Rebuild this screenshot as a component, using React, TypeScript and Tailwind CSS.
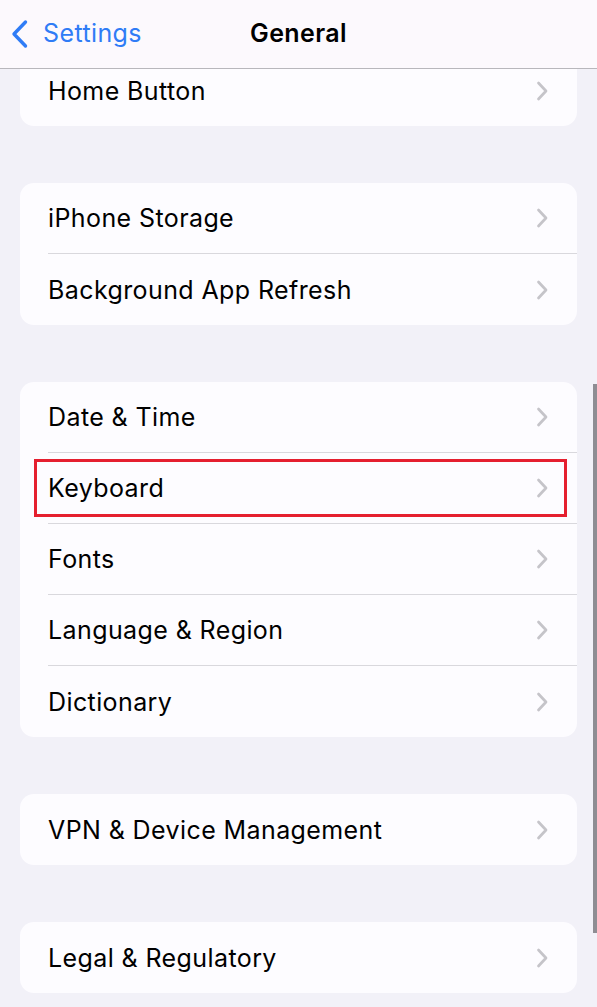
import { ReactNode } from "react";

const groups: string[][] = [
  ["Home Button"],
  ["iPhone Storage", "Background App Refresh"],
  ["Date & Time", "Keyboard", "Fonts", "Language & Region", "Dictionary"],
  ["VPN & Device Management"],
  ["Legal & Regulatory"],
];

function Chevron() {
  return (
    <svg width="13" height="20" viewBox="0 0 13 20" fill="none" className="shrink-0">
      <path d="M2.5 2l7.5 8-7.5 8" stroke="#c5c4c9" strokeWidth="2.7" strokeLinecap="round" strokeLinejoin="round" />
    </svg>
  );
}

function Row({ label, last, children }: { label: string; last: boolean; children?: ReactNode }) {
  return (
    <div className="relative h-[71px] pl-[28px]">
      <div className={`flex h-full items-center justify-between pr-[28px] ${last ? "" : "border-b border-[#d9d8dd]"}`}>
        <span className="pt-[2px] text-[25px] tracking-[0.4px] text-black">{label}</span>
        <Chevron />
      </div>
      {children}
    </div>
  );
}

export default function App() {
  return (
    <div className="relative h-[1007px] w-[597px] overflow-hidden bg-[#f2f1f8]" style={{ fontFamily: "Inter, 'Open Sans', sans-serif" }}>
      <div className="relative z-10 flex h-[69px] items-center border-b border-[#b8b7bc] bg-[#fcf9fd]">
        <div className="flex items-center pl-[10px]">
          <svg width="19" height="30" viewBox="0 0 19 30" fill="none">
            <path d="M15.5 3L4 15l11.5 12" stroke="#2f7cf6" strokeWidth="3.4" strokeLinecap="round" strokeLinejoin="round" />
          </svg>
          <span className="ml-[14px] text-[25px] tracking-[0.4px] text-[#2f7cf6]">Settings</span>
        </div>
        <span className="absolute left-1/2 -translate-x-1/2 text-[25px] font-semibold tracking-[0.4px] text-black">General</span>
      </div>

      <div className="-mt-[14px] flex flex-col gap-[57px] px-[20px]">
        {groups.map((rows, gi) => (
          <div key={gi} className="rounded-[14px] bg-[#fdfcff]">
            {rows.map((label, ri) => (
              <Row key={label} label={label} last={ri === rows.length - 1}>
                {label === "Keyboard" && (
                  <div className="pointer-events-none absolute left-[14px] right-[10px] top-[6px] h-[58px] border-[3px] border-[#e51f2f]" />
                )}
              </Row>
            ))}
          </div>
        ))}
      </div>

      <div className="absolute right-0 top-[384px] h-[549px] w-[4px] bg-[#8e8d93]" />
    </div>
  );
}
